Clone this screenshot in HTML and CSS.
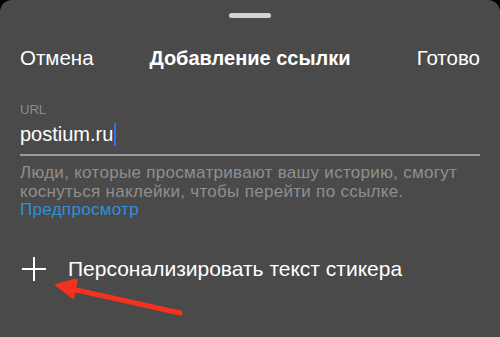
FILE: index.html
```html
<!DOCTYPE html>
<html lang="ru">
<head>
  <meta charset="UTF-8">
  <title>Добавление ссылки</title>
  <link rel="stylesheet" href="styles.css">
</head>
<body>
  <div class="sheet">
    <div class="handle"></div>

    <!-- Шапка -->
    <div class="header">
      <span class="header-btn">Отмена</span>
      <span class="header-title">Добавление ссылки</span>
      <span class="header-btn right">Готово</span>
    </div>

    <!-- Поле URL -->
    <div class="field">
      <div class="field-label">URL</div>
      <div class="field-value">postium.ru<span class="caret"></span></div>
    </div>

    <p class="hint">
      Люди, которые просматривают вашу историю, смогут<br>
      коснуться наклейки, чтобы перейти по ссылке.<br>
      <span class="preview-link">Предпросмотр</span>
    </p>

    <div class="custom-row">
      <svg class="plus" width="26" height="26" viewBox="0 0 26 26">
        <path d="M13 1v24M1 13h24" stroke="#fff" stroke-width="2" fill="none"/>
      </svg>
      <span>Персонализировать текст стикера</span>
    </div>

    <!-- Стрелка-указатель -->
    <svg class="arrow" width="140" height="50" viewBox="0 0 140 50">
      <path d="M126 34 L18 10" stroke="#f5321e" stroke-width="5" stroke-linecap="round"/>
      <path d="M2 6 L23 0 L19 19 Z" fill="#f5321e" stroke="#f5321e" stroke-width="2" stroke-linejoin="round"/>
    </svg>
  </div>
</body>
</html>
```

FILE: styles.css
```css
body {
  margin: 0;
  background-color: #000;
  font-family: "Liberation Sans", Arial, sans-serif;
}
.sheet {
  position: relative;
  height: 337px;
  background-color: #4a4a4a;
  border-radius: 12px 12px 0 0;
  color: #fff;
  overflow: hidden;
}
.handle {
  width: 42px;
  height: 5px;
  margin: 0 auto;
  position: relative;
  top: 13px;
  border-radius: 3px;
  background-color: #d4d4d4;
}
/* Шапка */
.header {
  display: grid;
  grid-template-columns: 1fr auto 1fr;
  align-items: center;
  padding: 42px 20px 0 20px;
  font-size: 20.5px;
  line-height: 22px;
}
.header-btn.right {
  text-align: right;
}
.header-title {
  font-weight: bold;
  font-size: 20px;
}
/* Поле */
.field {
  margin: 33px 20px 0 20px;
  padding-bottom: 8px;
  border-bottom: 2px solid #9a9a9a;
}
.field-label {
  font-size: 13px;
  color: #8c8c8c;
  line-height: 16px;
}
.field-value {
  font-size: 20px;
  line-height: 24px;
  margin-top: 4px;
  display: flex;
  align-items: center;
}
.caret {
  display: inline-block;
  width: 2px;
  height: 23px;
  margin-left: 1px;
  background-color: #3d6cf0;
}
.hint {
  margin: 8px 20px 0 20px;
  font-size: 17px;
  letter-spacing: 0.3px;
  line-height: 18.5px;
  color: #8f8f8f;
}
.preview-link {
  color: #2f8fd8;
}
.custom-row {
  display: flex;
  align-items: center;
  gap: 21px;
  margin: 36px 0 0 21px;
  font-size: 21px;
}
.plus {
  display: block;
}
.arrow {
  position: absolute;
  left: 54px;
  top: 279px;
}
```
